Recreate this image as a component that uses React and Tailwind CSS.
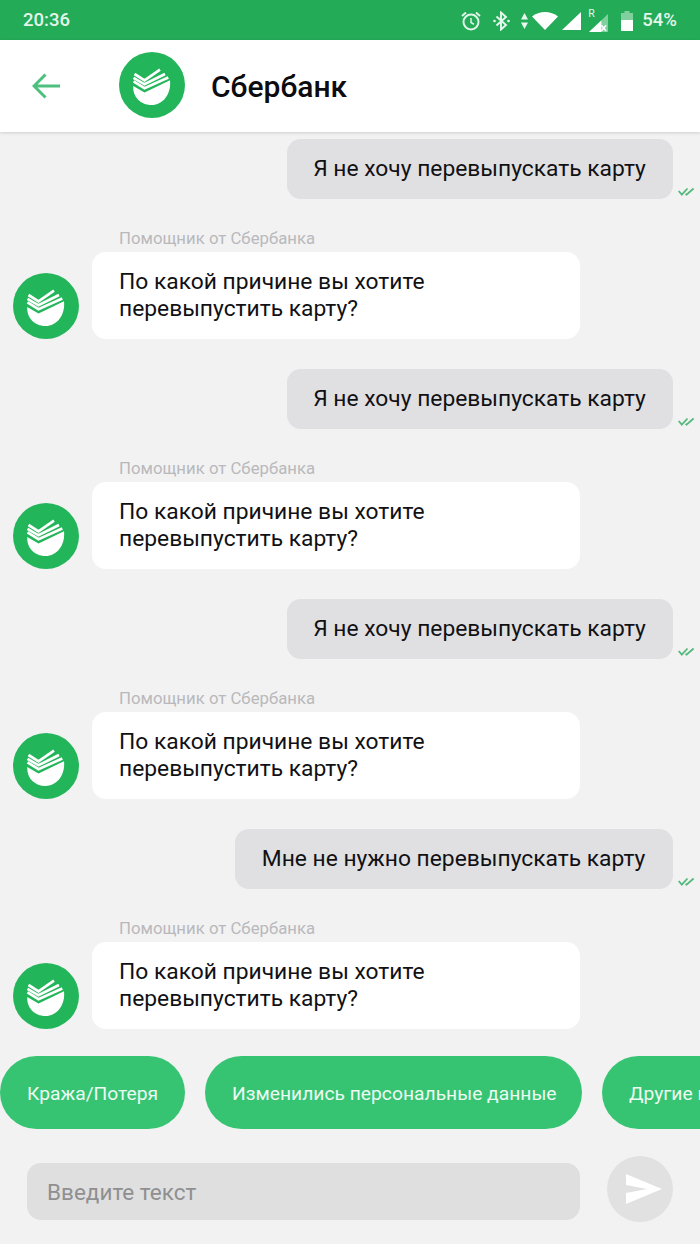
import React from "react";

function Logo({ className }) {
  return (
    <svg viewBox="0 0 66 66" className={className}>
      <circle cx="33" cy="33" r="33" fill="#22b559" />
      <path d="M14.3 34 L25.5 40.5 L51 28.2 C52.5 42 44 53 32.5 53 C21.5 53 13.5 44.5 14.3 34 Z" fill="#fff" />
      <path d="M14.5 29.3 L25.5 36.2 L49.3 25.5" fill="none" stroke="#fff" strokeWidth="2.7" />
      <path d="M14.5 25.8 L25.5 32.3 L46 22" fill="none" stroke="#fff" strokeWidth="2.7" />
      <path d="M15.5 22 L25.5 28.3 L41 17.7" fill="none" stroke="#fff" strokeWidth="2.7" />
    </svg>
  );
}

function Check() {
  return (
    <svg viewBox="0 0 17 9" className="absolute left-[678px] bottom-[3px] w-[17px] h-[9px]" fill="none" stroke="#55b97c" strokeWidth="1.8">
      <path d="M0.7 4 L3.8 7.6 L9.5 1.5" />
      <path d="M7.5 7 L8.5 7.6 L15.6 1.5" />
    </svg>
  );
}

function UserMessage({ text, width }) {
  return (
    <div className="relative flex justify-end pr-[27px]">
      <div className="h-[60px] flex items-center justify-center rounded-[14px] bg-[#e0e0e2] pr-[1px] text-[22.8px] text-[#111114]" style={{ width }}>
        {text}
      </div>
      <Check />
    </div>
  );
}

function BotMessage() {
  return (
    <div className="mt-[30px] mb-[30px]">
      <div className="h-[23px] pl-[119px] text-[16.75px] leading-[19px] text-[#b9b9bb]">Помощник от Сбербанка</div>
      <div className="flex items-end pl-[13px]">
        <Logo className="w-[66px] h-[66px] shrink-0" />
        <div className="ml-[13px] w-[488px] h-[87px] rounded-[14px] bg-white pl-[27px] pt-[17px] text-[22.8px] leading-[26.6px] text-[#111114]">
          По какой причине вы хотите
          <br />
          перевыпустить карту?
        </div>
      </div>
    </div>
  );
}

function Chip({ children, className }) {
  return (
    <div className={"h-[73px] shrink-0 rounded-full bg-[#37c472] flex items-center px-[27px] pt-[3px] text-[19.25px] text-[#ecfaf2] whitespace-nowrap " + className}>
      {children}
    </div>
  );
}

export default function App() {
  return (
    <div className="w-[700px] h-[1244px] overflow-hidden flex flex-col bg-[#f2f2f3] font-['Roboto',sans-serif]">
      <div className="h-10 shrink-0 bg-[#23ab58] flex items-center justify-between pl-[23px] pr-[23px] pt-[1px] text-white">
        <span className="text-[18.5px] font-medium text-[#e4f6ea]">20:36</span>
        <div className="flex items-center">
          <svg viewBox="0 0 22 22" className="w-[22px] h-[22px]" fill="none" stroke="#dff5e7" strokeWidth="2">
            <circle cx="11" cy="12" r="7.5" />
            <path d="M11 8v4.5l3 1.8" strokeWidth="1.5" />
            <path d="M2 6l4-3.5M20 6l-4-3.5" />
          </svg>
          <svg viewBox="0 0 17 20" className="ml-[11px] w-[17px] h-[20px]" fill="none" stroke="#e8f8ee" strokeWidth="1.9">
            <path d="M3.5 5.5L13 14l-5 4.5V1.5L13 6 3.5 14.5" />
            <circle cx="1.5" cy="10" r="1.3" fill="#e8f8ee" stroke="none" />
            <circle cx="15.5" cy="10" r="1.3" fill="#e8f8ee" stroke="none" />
          </svg>
          <svg viewBox="0 0 7 18" className="ml-[11px] w-[7px] h-[18px]" fill="#e8f8ee">
            <path d="M3.5 1L7 7.5H0zM3.5 17L0 10.5h7z" />
          </svg>
          <svg viewBox="0 0 26 20" className="ml-[4px] w-[26px] h-[20px]" fill="#fff">
            <path d="M0 5.5C7-0.5 19-0.5 26 5.5L13 19z" />
          </svg>
          <svg viewBox="0 0 20 20" className="ml-[4px] w-[19px] h-[19px]" fill="#fff">
            <path d="M0 20L20 1v19z" />
          </svg>
          <div className="relative ml-[7px] w-[20px] h-[24px]">
            <span className="absolute left-0 -top-[1px] text-[10.5px] leading-[12px] text-[#e8f8ee]">R</span>
            <svg viewBox="0 0 20 20" className="absolute left-[1px] top-[4px] w-[19px] h-[19px]">
              <path d="M0 20L20 1v19z" fill="#7fd09c" />
              <path d="M0 20L13 8v12z" fill="#fff" />
              <path d="M13 13l5 6M18 13l-5 6" stroke="#fff" strokeWidth="1.6" />
            </svg>
          </div>
          <svg viewBox="0 0 12 20" className="ml-[13px] w-[12px] h-[20px]">
            <path d="M3.5 0h5v2H12v18H0V2h3.5z" fill="#7fd09c" />
            <path d="M0 9h12v11H0z" fill="#fff" />
          </svg>
          <span className="ml-[9px] text-[18.5px] font-medium text-[#e4f6ea]">54%</span>
        </div>
      </div>

      <div className="relative z-10 h-[92px] shrink-0 bg-white flex items-center shadow-[0_1px_3px_rgba(0,0,0,0.15)]">
        <svg viewBox="0 0 28 26" className="ml-[32px] w-[28px] h-[26px]" fill="none" stroke="#4cc07c" strokeWidth="3">
          <path d="M28 13H2M13.5 1.5L2 13l11.5 11.5" />
        </svg>
        <Logo className="ml-[59px] mb-[2px] w-[66px] h-[66px]" />
        <span className="ml-[26px] mt-[1px] text-[30px] font-medium text-[#0c0c10]">Сбербанк</span>
      </div>

      <div className="flex-1 min-h-0 overflow-hidden flex flex-col pt-[7px]">
        <UserMessage text="Я не хочу перевыпускать карту" width={386} />
        <BotMessage />
        <UserMessage text="Я не хочу перевыпускать карту" width={386} />
        <BotMessage />
        <UserMessage text="Я не хочу перевыпускать карту" width={386} />
        <BotMessage />
        <UserMessage text="Мне не нужно перевыпускать карту" width={438} />
        <BotMessage />
      </div>

      <div className="shrink-0 flex gap-[20px] h-[73px] mb-[27px]">
        <Chip className="w-[185px]">Кража/Потеря</Chip>
        <Chip className="w-[377px]">Изменились персональные данные</Chip>
        <Chip>Другие причины</Chip>
      </div>

      <div className="shrink-0 h-[66px] mb-[22px] flex items-start pl-[27px]">
        <div className="mt-[7px] w-[553px] h-[57px] rounded-[14px] bg-[#dfdfe0] flex items-center pl-[20px] pt-[2px] text-[22.5px] text-[#8f8f91]">
          Введите текст
        </div>
        <div className="ml-[27px] w-[66px] h-[66px] rounded-full bg-[#e1e1e2] flex items-center justify-center">
          <svg viewBox="0 0 36 30" className="ml-[7px] w-[36px] h-[30px]" fill="#fff">
            <path d="M0 0L36 15L0 30V19L21 15L0 11z" />
          </svg>
        </div>
      </div>
    </div>
  );
}
